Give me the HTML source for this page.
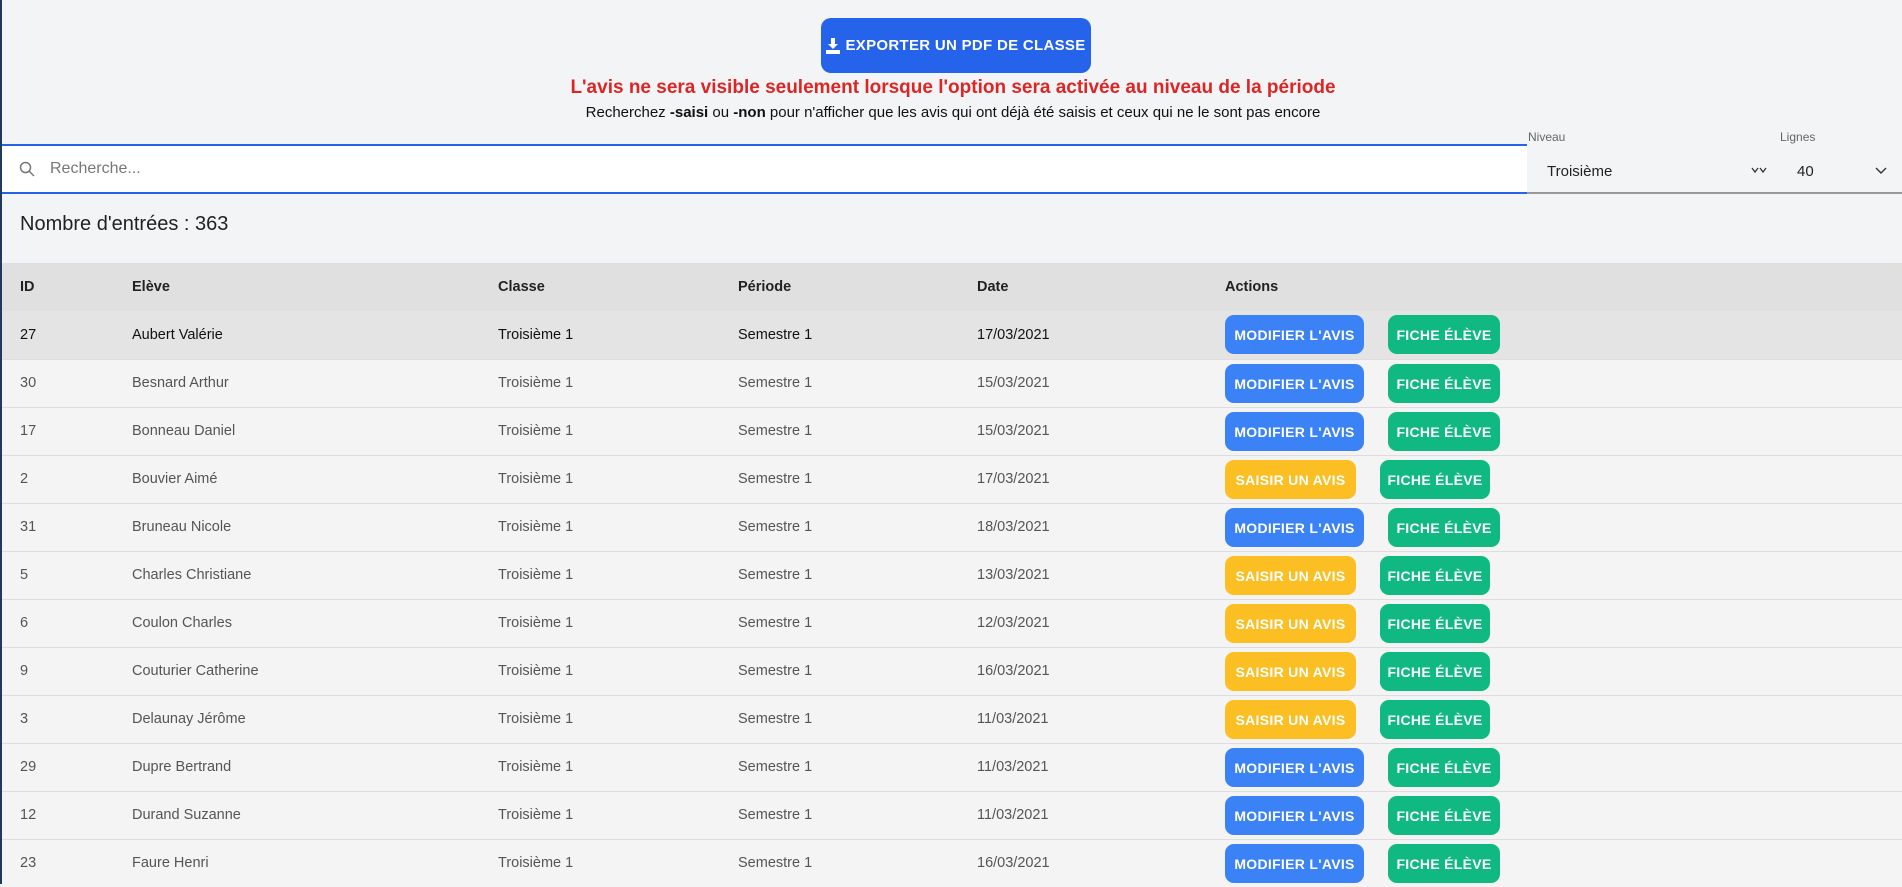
<!DOCTYPE html>
<html><head><meta charset="utf-8"><style>
*{box-sizing:border-box;margin:0;padding:0}
body{width:1902px;height:884px;overflow:hidden;background:#f3f4f6;font-family:"Liberation Sans",sans-serif;position:relative;border-left:2px solid #1e3a5f}
.btnx{position:absolute;left:819px;top:18px;width:270px;height:55px;background:#2563eb;border-radius:10px;color:#fff;font-weight:bold;font-size:15px;display:flex;align-items:center;justify-content:center;letter-spacing:.3px}
.red{position:absolute;top:77px;left:0;width:1902px;text-align:center;color:#dc2626;font-weight:bold;font-size:19px}
.sub{position:absolute;top:104px;left:0;width:1902px;text-align:center;color:#111;font-size:15px}
.search{position:absolute;left:0;top:144px;width:1525px;height:50px;background:#fff;border-top:2px solid #2563eb;border-bottom:2px solid #2563eb;display:flex;align-items:center;padding-left:17px;color:#777;font-size:16px}
.lbl{position:absolute;top:130px;font-size:12px;color:#666}
.sel{position:absolute;top:150px;height:44px;border-bottom:2px solid #999;font-size:15px;color:#222;display:flex;align-items:center}
.cnt{position:absolute;left:18px;top:213px;font-size:20px;color:#222}
table{position:absolute;top:263px;left:0;width:1900px;border-collapse:collapse;font-size:14.5px}
th{height:48px;background:#e0e0e0;text-align:left;font-weight:bold;color:#222}
td{height:48px;color:#555;border-top:1px solid #ddd;background:#f4f4f4}
tr.h td{background:#e4e4e4;color:#111;border-top:none}
th:first-child,td:first-child{padding-left:18px}
.b{display:inline-block;height:39px;line-height:40px;border-radius:9px;color:#fff;font-weight:bold;font-size:14px;text-align:center;vertical-align:middle;letter-spacing:.3px}
.m{background:#3b82f6;width:139px}.s{background:#fbbf24;width:131px}.f{background:#10b981;width:112px;margin-left:24px}
.s+.f{margin-left:24px;width:110px}
</style></head><body>
<div class="btnx"><svg width="14" height="16" viewBox="0 0 14 16" style="margin-right:5px"><path d="M5 0h4v6h3l-5 5-5-5h3z M0 12h14v4H0z" fill="#fff"/></svg>EXPORTER UN PDF DE CLASSE</div>
<div class="red">L'avis ne sera visible seulement lorsque l'option sera activée au niveau de la période</div>
<div class="sub">Recherchez <b>-saisi</b> ou <b>-non</b> pour n'afficher que les avis qui ont déjà été saisis et ceux qui ne le sont pas encore</div>
<div class="search"><svg width="16" height="16" viewBox="0 0 16 16" style="margin-right:15px"><circle cx="6.5" cy="6.5" r="5" stroke="#777" stroke-width="1.5" fill="none"/><path d="M10 10l5 5" stroke="#777" stroke-width="1.5"/></svg>Recherche...</div>
<div class="lbl" style="left:1526px">Niveau</div><div class="lbl" style="left:1778px">Lignes</div>
<div class="sel" style="left:1525px;width:240px;padding-left:20px">Troisième<svg style="position:absolute;left:224px" width="16" height="8" viewBox="0 0 16 8"><path d="M1 1l3 4 3-4M9 1l3 4 3-4" stroke="#333" fill="none" stroke-width="1.3"/></svg></div>
<div class="sel" style="left:1765px;width:137px;padding-left:30px">40<svg style="position:absolute;left:108px" width="12" height="8" viewBox="0 0 12 8"><path d="M1 1l5 5 5-5" stroke="#333" fill="none" stroke-width="1.4"/></svg></div>
<div class="cnt">Nombre d'entrées : 363</div>
<table>
<colgroup><col style="width:130px"><col style="width:366px"><col style="width:240px"><col style="width:239px"><col style="width:248px"><col></colgroup>
<tr><th>ID</th><th>Elève</th><th>Classe</th><th>Période</th><th>Date</th><th>Actions</th></tr>
<tr class="h"><td>27</td><td>Aubert Valérie</td><td>Troisième 1</td><td>Semestre 1</td><td>17/03/2021</td><td><span class="b m">MODIFIER L'AVIS</span><span class="b f">FICHE ÉLÈVE</span></td></tr>
<tr><td>30</td><td>Besnard Arthur</td><td>Troisième 1</td><td>Semestre 1</td><td>15/03/2021</td><td><span class="b m">MODIFIER L'AVIS</span><span class="b f">FICHE ÉLÈVE</span></td></tr>
<tr><td>17</td><td>Bonneau Daniel</td><td>Troisième 1</td><td>Semestre 1</td><td>15/03/2021</td><td><span class="b m">MODIFIER L'AVIS</span><span class="b f">FICHE ÉLÈVE</span></td></tr>
<tr><td>2</td><td>Bouvier Aimé</td><td>Troisième 1</td><td>Semestre 1</td><td>17/03/2021</td><td><span class="b s">SAISIR UN AVIS</span><span class="b f">FICHE ÉLÈVE</span></td></tr>
<tr><td>31</td><td>Bruneau Nicole</td><td>Troisième 1</td><td>Semestre 1</td><td>18/03/2021</td><td><span class="b m">MODIFIER L'AVIS</span><span class="b f">FICHE ÉLÈVE</span></td></tr>
<tr><td>5</td><td>Charles Christiane</td><td>Troisième 1</td><td>Semestre 1</td><td>13/03/2021</td><td><span class="b s">SAISIR UN AVIS</span><span class="b f">FICHE ÉLÈVE</span></td></tr>
<tr><td>6</td><td>Coulon Charles</td><td>Troisième 1</td><td>Semestre 1</td><td>12/03/2021</td><td><span class="b s">SAISIR UN AVIS</span><span class="b f">FICHE ÉLÈVE</span></td></tr>
<tr><td>9</td><td>Couturier Catherine</td><td>Troisième 1</td><td>Semestre 1</td><td>16/03/2021</td><td><span class="b s">SAISIR UN AVIS</span><span class="b f">FICHE ÉLÈVE</span></td></tr>
<tr><td>3</td><td>Delaunay Jérôme</td><td>Troisième 1</td><td>Semestre 1</td><td>11/03/2021</td><td><span class="b s">SAISIR UN AVIS</span><span class="b f">FICHE ÉLÈVE</span></td></tr>
<tr><td>29</td><td>Dupre Bertrand</td><td>Troisième 1</td><td>Semestre 1</td><td>11/03/2021</td><td><span class="b m">MODIFIER L'AVIS</span><span class="b f">FICHE ÉLÈVE</span></td></tr>
<tr><td>12</td><td>Durand Suzanne</td><td>Troisième 1</td><td>Semestre 1</td><td>11/03/2021</td><td><span class="b m">MODIFIER L'AVIS</span><span class="b f">FICHE ÉLÈVE</span></td></tr>
<tr><td>23</td><td>Faure Henri</td><td>Troisième 1</td><td>Semestre 1</td><td>16/03/2021</td><td><span class="b m">MODIFIER L'AVIS</span><span class="b f">FICHE ÉLÈVE</span></td></tr>
</table>
</body></html>
